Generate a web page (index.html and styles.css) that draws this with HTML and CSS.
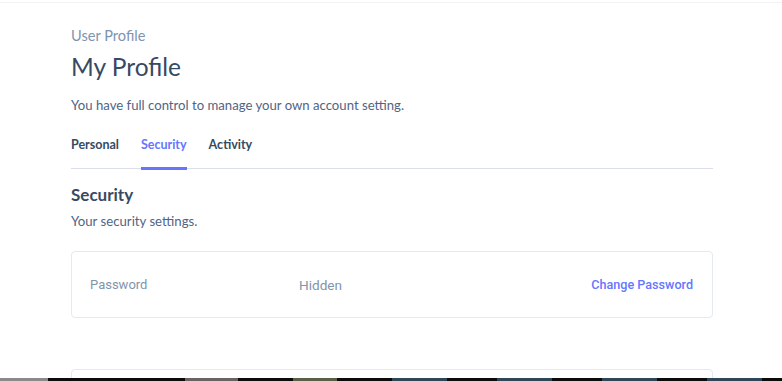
FILE: index.html
```html
<!DOCTYPE html>
<html>
<head>
<meta charset="utf-8">
<link rel="stylesheet" href="styles.css">
</head>
<body>

<div class="topline"></div>

<div class="page">
	<div class="head">
		<div class="overline">User Profile</div>
		<h1 class="title">My Profile</h1>
		<p class="lead">You have full control to manage your own account setting.</p>
	</div>

	<ul class="tabs">
		<li class="tab">Personal</li>
		<li class="tab active">Security</li>
		<li class="tab">Activity</li>
	</ul>

	<div class="block-head">
		<h2 class="block-title">Security</h2>
		<p class="block-sub">Your security settings.</p>
	</div>

	<div class="card">
		<div class="row">
			<span class="label">Password</span>
			<span class="value">Hidden</span>
			<a class="link" href="#">Change Password</a>
		</div>
	</div>

	<div class="card next"></div>
</div>

<div class="taskbar">
	<span class="tb tb-start"></span>
	<span class="tb tb-a"></span>
	<span class="tb tb-b"></span>
	<span class="tb tb-win first"></span>
	<span class="tb tb-win"></span>
	<span class="tb tb-win"></span>
	<span class="tb tb-win"></span>
</div>

</body>
</html>
```

FILE: styles.css
```css
html {
	height: 100%;
	background: #fff;
}

body {
	margin: 0;
	height: 100%;
	overflow: hidden;
	position: relative;
	font-family: Lato, "Open Sans", sans-serif;
	color: #526484;
}

.topline {
	height: 1px;
	margin-top: 2px;
	background: #f1f2f4;
}

.page {
	padding: 23px 69px 0 71px;
}

.overline {
	font-size: 14.6px;
	line-height: 20px;
	color: #8094ae;
}

.title {
	margin: 5px 0 0;
	font-size: 24.5px;
	font-weight: 400;
	line-height: 32px;
	color: #364a63;
}

.lead {
	margin: 12px 0 0;
	font-size: 13.15px;
	line-height: 20px;
}

.tabs {
	display: flex;
	gap: 22px;
	margin: 22px 0 0;
	padding: 0;
	list-style: none;
	border-bottom: 1px solid #dbdfea;
}

.tab {
	padding: 0 0 14px;
	font-size: 12.5px;
	font-weight: 700;
	line-height: 16px;
	color: #364a63;
	border-bottom: 3px solid transparent;
	margin-bottom: -2px;
}

.tab.active {
	color: #6576ff;
	border-color: #6576ff;
}

.block-head {
	padding: 15px 0 0;
}

.block-title {
	margin: 0;
	font-size: 17px;
	font-weight: 700;
	line-height: 22px;
	color: #364a63;
}

.block-sub {
	margin: 5px 0 0;
	font-size: 13.2px;
	line-height: 20px;
}

.card {
	margin-top: 20px;
	border: 1px solid #e5e9f2;
	border-radius: 4px;
}

.row {
	display: flex;
	align-items: center;
	height: 65px;
	padding: 0 19px 0 18px;
	font-family: Roboto, sans-serif;
	font-size: 13px;
}

.label {
	width: 209px;
	color: #8094ae;
}

.value {
	flex: 1;
	font-size: 13.6px;
	color: #8094ae;
}

.link {
	color: #6576ff;
	font-size: 12.6px;
	font-weight: 500;
	text-decoration: none;
}

.card.next {
	margin-top: 51px;
	height: 40px;
}

/* screen capture strip at the bottom */
.taskbar {
	position: absolute;
	left: 0;
	right: 0;
	bottom: 0;
	height: 3px;
	display: flex;
	background: #0b0b0b;
}

.tb {
	height: 3px;
}

.tb-start {
	width: 48px;
	background: #8a8a8a;
}

.tb-a {
	width: 53px;
	margin-left: 137px;
	background: #6b6264;
}

.tb-b {
	width: 44px;
	margin-left: 55px;
	background: #5a6048;
}

.tb-win {
	width: 55px;
	margin-left: 50px;
	background: #2d4756;
}

.tb-win.first {
	margin-left: 55px;
}
```
